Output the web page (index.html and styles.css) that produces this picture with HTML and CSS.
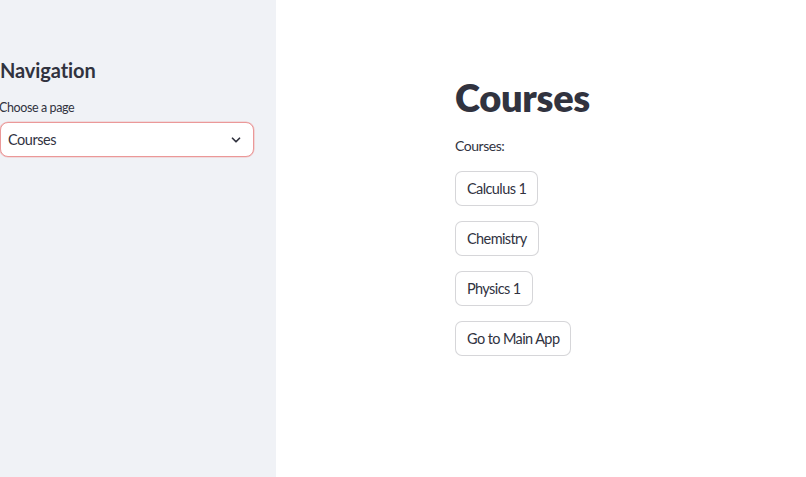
FILE: index.html
```html
<!DOCTYPE html>
<html>
<head>
<meta charset="utf-8">
<link rel="stylesheet" href="styles.css">
</head>
<body>
<div class="app">
  <aside class="sidebar">
    <h2 class="side-title">Navigation</h2>
    <label class="field-label">Choose a page</label>
    <div class="select">
      <span class="select-value">Courses</span>
      <svg class="chevron" width="14" height="14" viewBox="0 0 24 24"><path d="M6 9l6 6 6-6" fill="none" stroke="#31333f" stroke-width="3" stroke-linecap="round" stroke-linejoin="round"/></svg>
    </div>
  </aside>
  <main class="main">
    <div class="content">
      <h1 class="title">Courses</h1>
      <p class="text">Courses:</p>
      <div class="buttons">
        <button class="btn">Calculus 1</button>
        <button class="btn">Chemistry</button>
        <button class="btn">Physics 1</button>
        <button class="btn">Go to Main App</button>
      </div>
    </div>
  </main>
</div>
</body>
</html>
```
FILE: styles.css
```css
html, body {
  margin: 0;
  padding: 0;
  height: 100%;
  background: #ffffff;
  font-family: "Lato", "Noto Sans", sans-serif;
  color: #31333f;
}
.app {
  display: flex;
  height: 477px;
  overflow: hidden;
}
.sidebar {
  width: 276px;
  flex: none;
  background: #f0f2f6;
  padding: 55px 22px 0 0;
  box-sizing: border-box;
}
.side-title {
  margin: 0;
  font-size: 20px;
  font-weight: 700;
  line-height: 30px;
  letter-spacing: -0.1px;
}
.field-label {
  display: block;
  margin: 15px 0 6px -1px;
  font-size: 12.5px;
  line-height: 16px;
  letter-spacing: -0.4px;
}
.select {
  display: flex;
  align-items: center;
  justify-content: space-between;
  height: 35px;
  box-sizing: border-box;
  border: 1px solid #eb9898;
  box-shadow: 0 0 0 0.6px rgba(235, 152, 152, 0.5);
  border-radius: 8px;
  background: #fff;
  padding: 0 10px 0 7px;
}
.select-value {
  font-size: 14.5px;
  letter-spacing: -0.45px;
}
.chevron {
  display: block;
}
.main {
  flex: 1;
  padding: 72px 0 0 179px;
}
.title {
  margin: 0;
  font-size: 38px;
  font-weight: 800;
  line-height: 50px;
  letter-spacing: -0.3px;
}
.text {
  margin: 14px 0 0 0;
  font-size: 14px;
  line-height: 20px;
  letter-spacing: -0.45px;
}
.buttons {
  display: flex;
  flex-direction: column;
  align-items: flex-start;
  gap: 15px;
  margin-top: 15px;
}
.btn {
  height: 35px;
  padding: 0 11px;
  font-family: inherit;
  font-size: 14.5px;
  letter-spacing: -0.6px;
  color: #31333f;
  background: #fff;
  border: 1px solid rgba(49, 51, 63, 0.2);
  border-radius: 7px;
}
```
